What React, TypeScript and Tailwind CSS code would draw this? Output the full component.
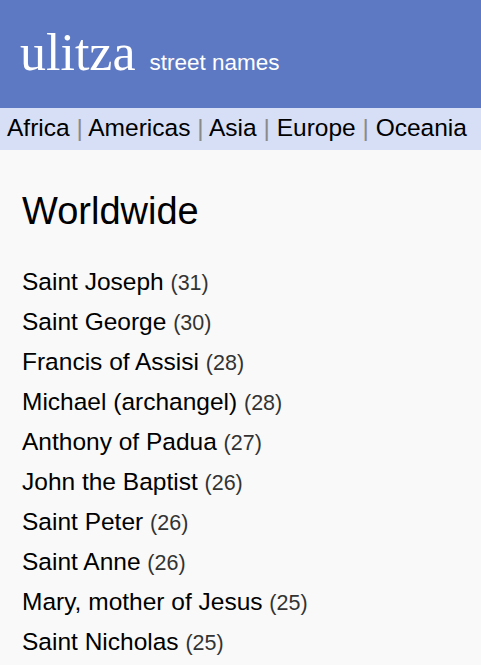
import React from "react";

const regions = ["Africa", "Americas", "Asia", "Europe", "Oceania"];
const saints: [string, number][] = [
  ["Saint Joseph", 31],
  ["Saint George", 30],
  ["Francis of Assisi", 28],
  ["Michael (archangel)", 28],
  ["Anthony of Padua", 27],
  ["John the Baptist", 26],
  ["Saint Peter", 26],
  ["Saint Anne", 26],
  ["Mary, mother of Jesus", 25],
  ["Saint Nicholas", 25],
];

export default function App() {
  return (
    <div className="min-h-[665px] bg-[#f9f9f9] text-black font-['Liberation_Sans',Arial,sans-serif]">
      <header className="h-[108px] bg-[#5e79c3] pl-5 pt-[27px] text-white">
        <div className="flex items-baseline">
          <span className="font-['Liberation_Serif','Times_New_Roman',serif] text-[52px] leading-none">
            ulitza
          </span>
          <span className="ml-[14px] text-[22.5px] leading-none">street names</span>
        </div>
      </header>
      <nav className="h-[42px] whitespace-nowrap bg-[#d6dff5] pl-[7px] text-[24.5px] leading-[40px]">
        {regions.map((r, i) => (
          <React.Fragment key={r}>
            {i > 0 && <span className="text-[#8a8a8a]"> | </span>}
            <span>{r}</span>
          </React.Fragment>
        ))}
      </nav>
      <main className="pl-[22px]">
        <h1 className="mt-[42px] text-[38px] leading-[38px]">Worldwide</h1>
        <ul className="mt-[32px]">
          {saints.map(([name, n]) => (
            <li key={name} className="h-[40px] text-[24.5px] leading-[40px] whitespace-nowrap">
              {name} <span className="text-[21.5px] leading-none text-[#333]">({n})</span>
            </li>
          ))}
        </ul>
      </main>
    </div>
  );
}
